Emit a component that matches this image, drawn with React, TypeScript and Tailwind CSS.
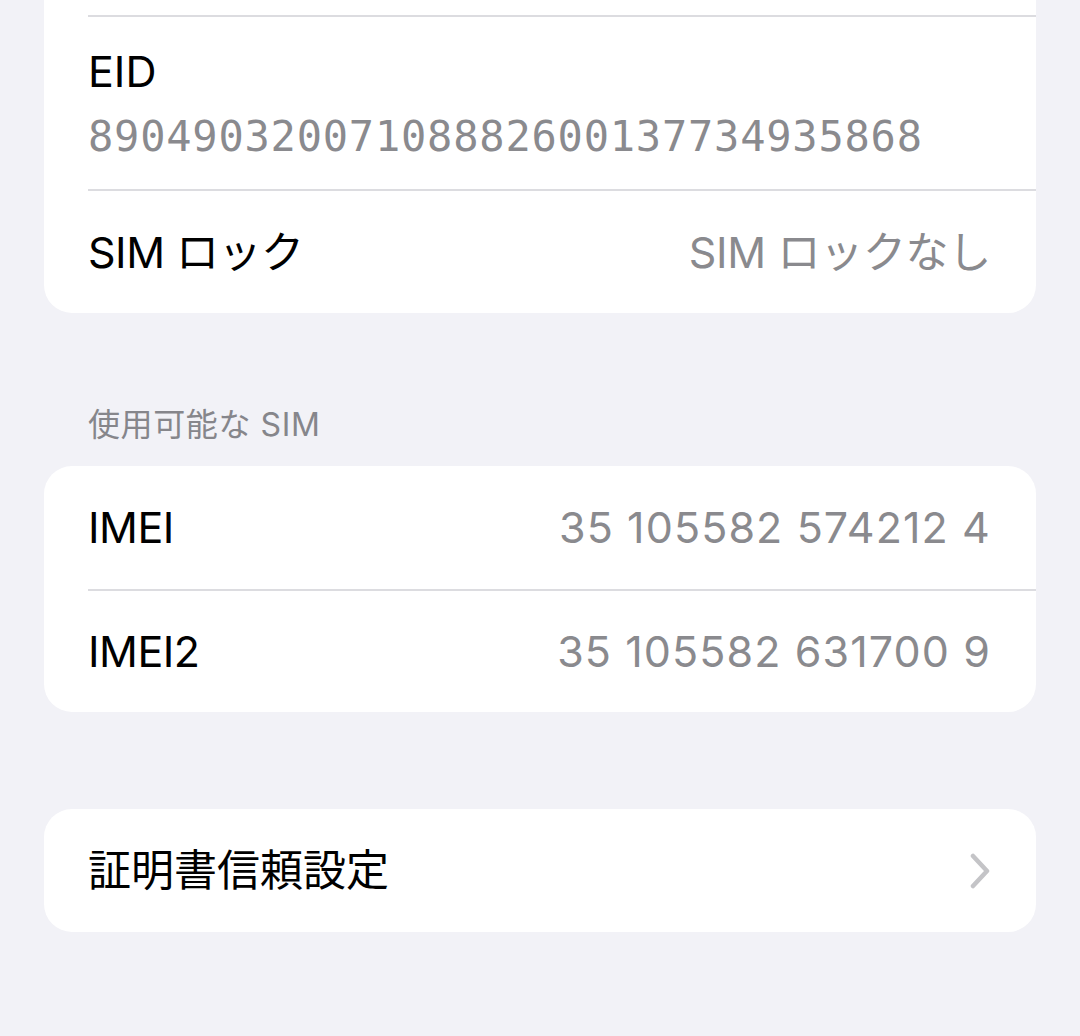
const sans = "font-['Inter','Noto_Sans_CJK_JP',sans-serif]";

function Chevron() {
  return (
    <svg width="22" height="36" viewBox="0 0 22 36" fill="none" className="shrink-0">
      <path d="M4 3 L18 18 L4 33" stroke="#c4c4c7" strokeWidth="4.5" strokeLinecap="round" strokeLinejoin="round" />
    </svg>
  );
}

function Row({
  label,
  value,
  first,
  chevron,
  numeric,
  tall,
}: {
  label: string;
  value?: string;
  first?: boolean;
  chevron?: boolean;
  numeric?: boolean;
  tall?: boolean;
}) {
  return (
    <div
      className={`ml-[44px] flex items-center justify-between pr-[45px] ${tall ? "h-[124px]" : "h-[123px]"} ${
        first ? "" : "border-t-2 border-[#dcdce0]"
      }`}
    >
      <span className={`${chevron ? "text-[43px]" : "text-[43px] tracking-[-0.5px]"} text-black`}>{label}</span>
      {value && (
        <span className={`text-[43px] text-[#8a8a8e] ${numeric ? "tracking-[1.1px]" : "tracking-[-0.3px]"}`}>{value}</span>
      )}
      {chevron && <Chevron />}
    </div>
  );
}

export default function App() {
  return (
    <div className={`min-h-[1036px] w-[1080px] overflow-hidden bg-[#f2f2f7] px-[44px] ${sans}`}>
      <div className="rounded-b-[28px] bg-white">
        <div className="h-[15px]" />
        <div className="ml-[44px] flex h-[174px] flex-col border-t-2 border-[#dcdce0] pt-[28px]">
          <span className="text-[43px] leading-[52px] text-black">EID</span>
          <span className="mt-[15px] font-['DejaVu_Sans_Mono','Liberation_Mono',monospace] text-[42px] leading-[50px] tracking-[0.8px] text-[#8a8a8e]">
            89049032007108882600137734935868
          </span>
        </div>
        <Row label="SIM ロック" value="SIM ロックなし" tall />
      </div>

      <div className="pb-[21px] pl-[44px] pt-[92px] text-[32px] leading-[40px] tracking-[0.6px] text-[#86868b]">使用可能な SIM</div>

      <div className="overflow-hidden rounded-[28px] bg-white">
        <Row label="IMEI" value="35 105582 574212 4" numeric first />
        <Row label="IMEI2" value="35 105582 631700 9" numeric />
      </div>

      <div className="mt-[97px] overflow-hidden rounded-[28px] bg-white">
        <Row label="証明書信頼設定" chevron first />
      </div>
    </div>
  );
}
